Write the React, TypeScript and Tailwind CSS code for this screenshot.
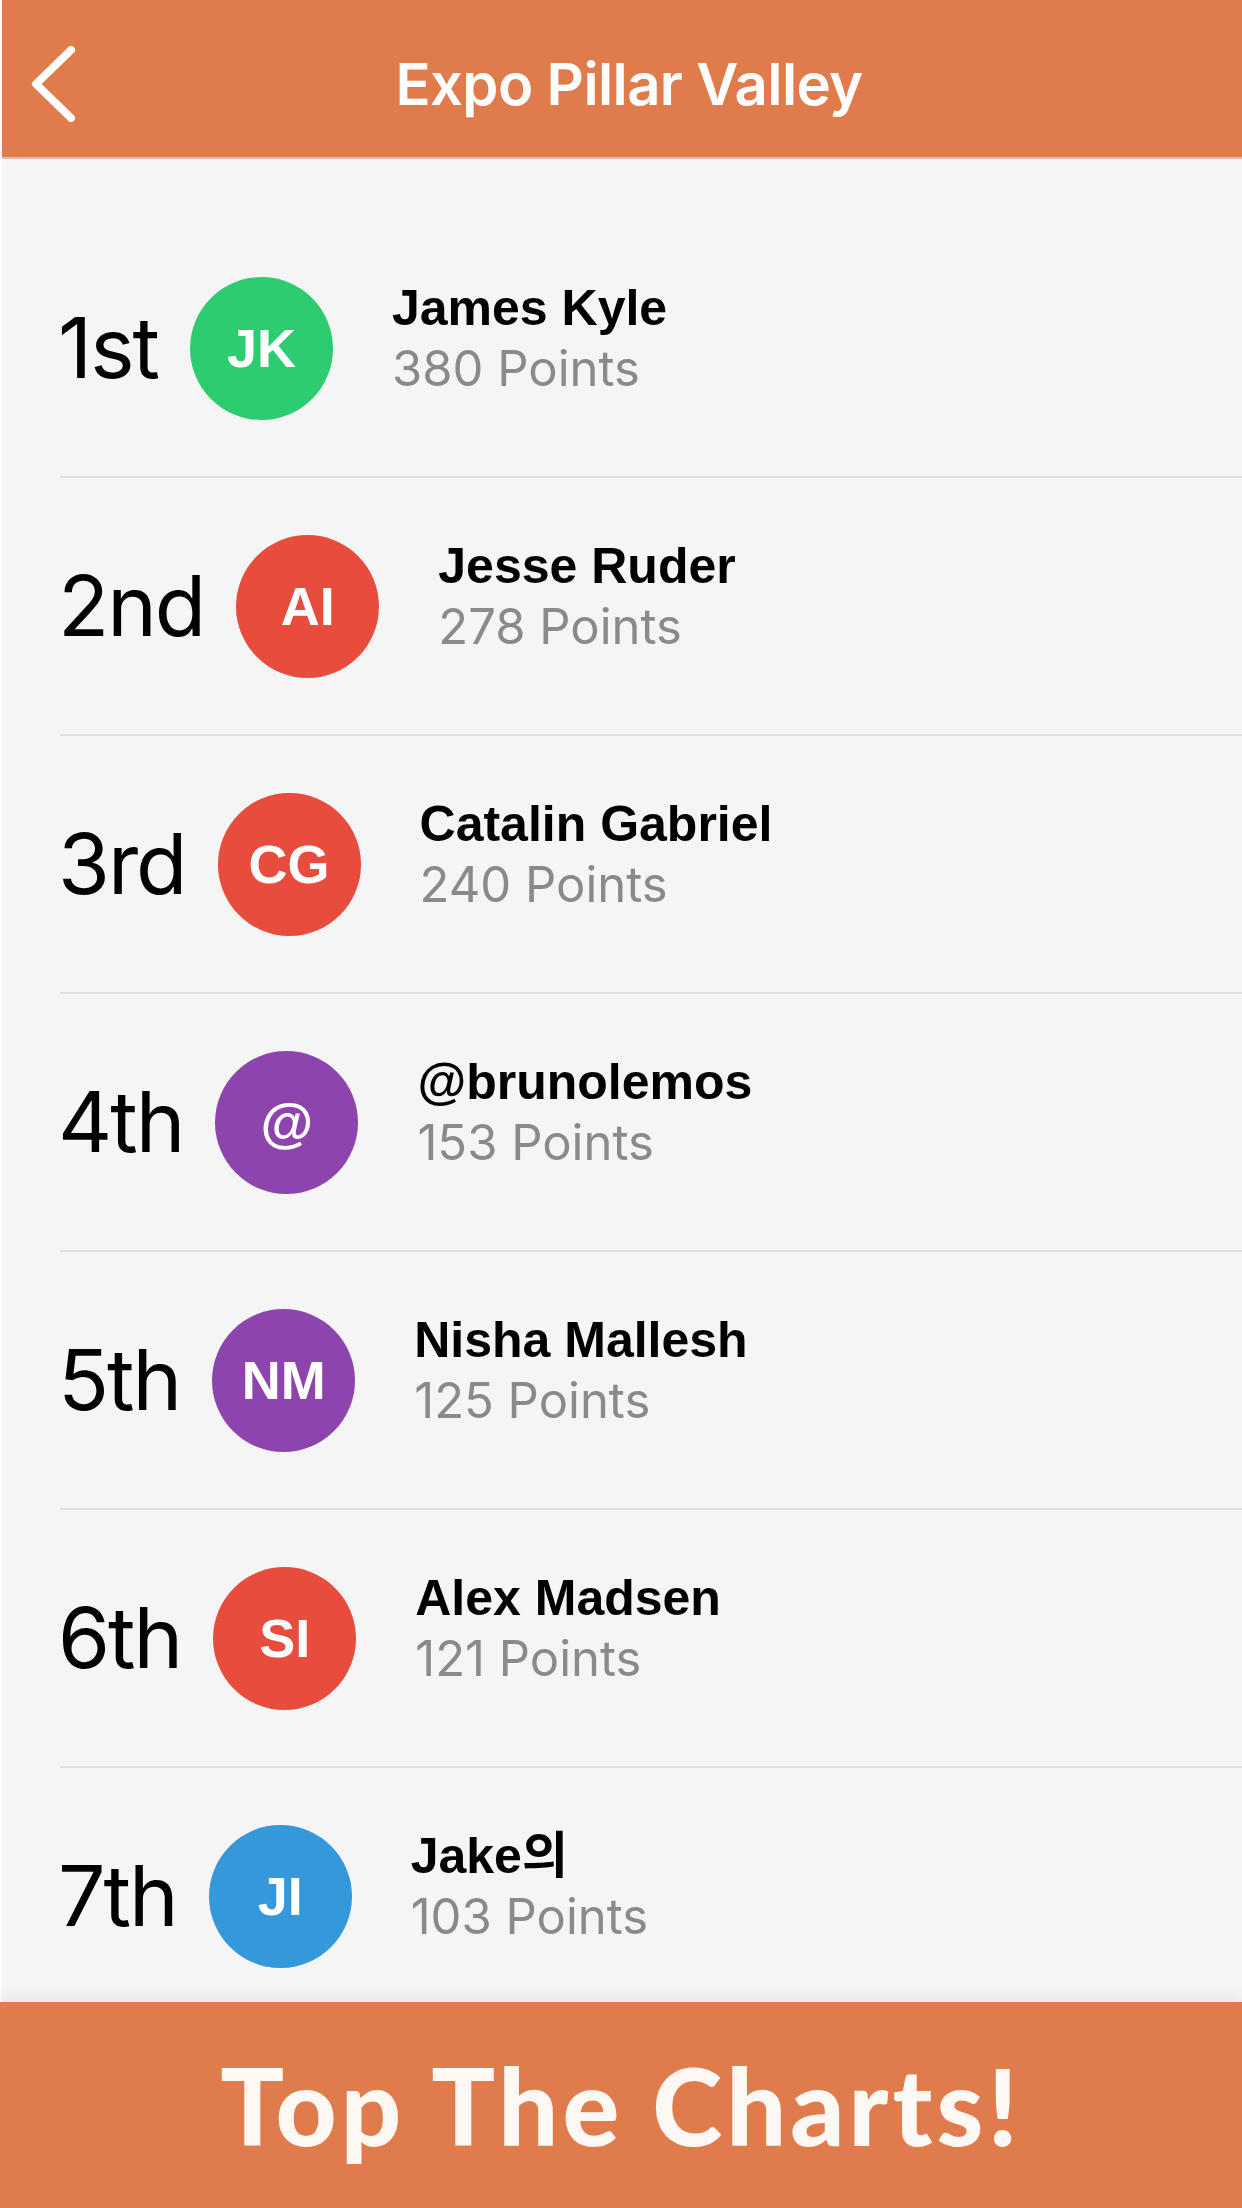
import React from "react";

type Row = {
  rank: string;
  initials: string;
  color: string;
  name: string;
  points: number;
};

const rows: Row[] = [
  { rank: "1st", initials: "JK", color: "bg-[#2ecc71]", name: "James Kyle", points: 380 },
  { rank: "2nd", initials: "AI", color: "bg-[#e74c3c]", name: "Jesse Ruder", points: 278 },
  { rank: "3rd", initials: "CG", color: "bg-[#e74c3c]", name: "Catalin Gabriel", points: 240 },
  { rank: "4th", initials: "@", color: "bg-[#8e44ad]", name: "@brunolemos", points: 153 },
  { rank: "5th", initials: "NM", color: "bg-[#8e44ad]", name: "Nisha Mallesh", points: 125 },
  { rank: "6th", initials: "SI", color: "bg-[#e74c3c]", name: "Alex Madsen", points: 121 },
  { rank: "7th", initials: "JI", color: "bg-[#3498db]", name: "Jake의", points: 103 },
];

function LeaderRow({ row }: { row: Row }) {
  return (
    <div className="h-[258px] shrink-0 ml-[58px] flex items-center border-b-[2px] border-[#e0e0e0]">
      <span className="-ml-[2px] font-['Inter',sans-serif] text-[84px] leading-none text-black tracking-[-2px]">
        {row.rank}
      </span>
      <div
        className={`ml-[32px] w-[143px] h-[143px] shrink-0 rounded-full ${row.color} flex items-center justify-center`}
      >
        <span className="font-['Liberation_Sans',Arial,sans-serif] font-bold text-[54px] leading-none text-white">
          {row.initials}
        </span>
      </div>
      <div className="ml-[59px] mb-[18px] flex flex-col">
        <span className="font-['Liberation_Sans','Noto_Sans_CJK_KR',Arial,sans-serif] font-bold text-[50px] leading-[60px] text-black">
          {row.name}
        </span>
        <span className="font-['Inter',sans-serif] text-[49px] leading-[62px] text-[#8a8a8a]">
          {row.points} Points
        </span>
      </div>
    </div>
  );
}

export default function App() {
  return (
    <div className="w-[1242px] h-[2208px] flex flex-col bg-[#f5f5f5] overflow-hidden">
      <div className="flex-1 min-h-0 flex flex-col border-l-[2px] border-[#fbfbfb]">
        <header className="h-[159px] shrink-0 bg-[#e07b4c] border-b-[2px] border-[#c8c2be] grid grid-cols-[1fr_auto_1fr] items-center pt-[10px]">
          <div className="pl-[28px] flex items-center">
            <svg width="48" height="76" viewBox="0 0 48 76" fill="none">
              <polyline
                points="41,4 6,38 41,72"
                stroke="white"
                strokeWidth="8"
                strokeLinecap="round"
                strokeLinejoin="round"
              />
            </svg>
          </div>
          <h1 className="pl-[14px] font-['Inter',sans-serif] font-semibold text-[58px] leading-none text-white tracking-[-0.6px]">
            Expo Pillar Valley
          </h1>
          <div />
        </header>
        <main className="flex-1 min-h-0 overflow-hidden pt-[61px] flex flex-col">
          {rows.map((r) => (
            <LeaderRow key={r.rank} row={r} />
          ))}
        </main>
      </div>
      <footer className="h-[206px] shrink-0 bg-[#e07b4c] flex items-center justify-center shadow-[0_-6px_14px_rgba(0,0,0,0.06)] relative">
        <span className="font-['Lato',sans-serif] font-black text-[106px] leading-none text-[#fdf8f4] tracking-[4px]">
          Top The Charts!
        </span>
      </footer>
    </div>
  );
}
